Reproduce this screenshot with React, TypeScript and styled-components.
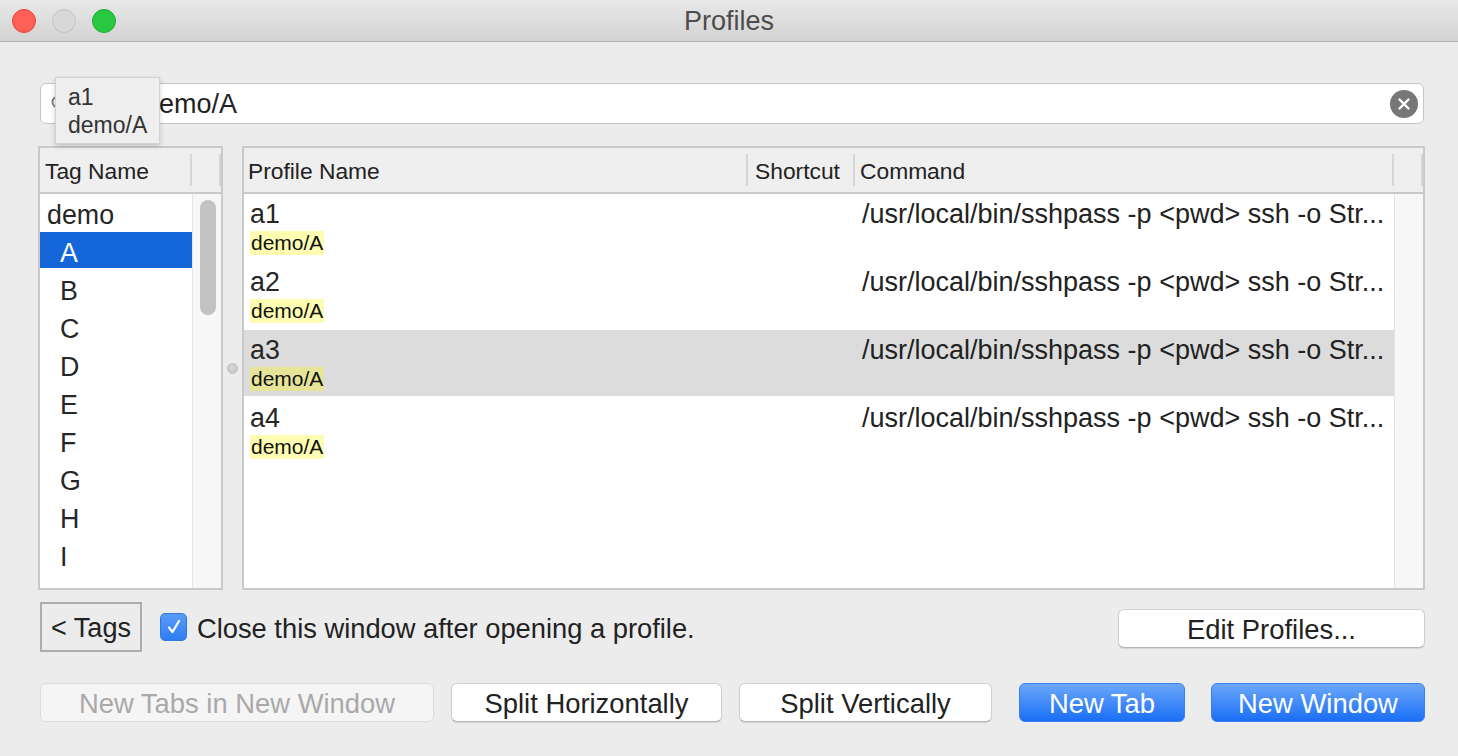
import React from "react";
import styled, { createGlobalStyle, css } from "styled-components";

const Global = createGlobalStyle`
  html, body { margin: 0; padding: 0; background: #ececec; }
  body { font-family: "Liberation Sans", Arial, sans-serif; color: #222; }
  * { box-sizing: border-box; }
`;

const Window = styled.div`
  width: 1458px;
  height: 756px;
  display: flex;
  flex-direction: column;
  background: #ececec;
  overflow: hidden;
`;

const TitleBar = styled.div`
  height: 42px;
  display: grid;
  grid-template-columns: 1fr auto 1fr;
  align-items: center;
  background: linear-gradient(#e8e8e8, #d3d3d3);
  border-bottom: 1px solid #b4b4b4;
`;

const Lights = styled.div`
  display: flex;
  gap: 16px;
  padding-left: 12px;
`;

const Light = styled.span<{ $c: string; $b: string }>`
  width: 24px;
  height: 24px;
  border-radius: 50%;
  background: ${(p) => p.$c};
  border: 1px solid ${(p) => p.$b};
`;

const Title = styled.div`
  font-size: 27px;
  color: #4d4d4d;
  margin-top: 2px;
`;

const Content = styled.div`
  flex: 1;
  display: flex;
  flex-direction: column;
  padding: 41px 33px 0 38px;
`;

const SearchField = styled.div`
  position: relative;
  height: 41px;
  margin: 0 1px 0 2px;
  background: #fff;
  border: 1px solid #c6c6c6;
  border-radius: 6px;
  display: flex;
  align-items: center;
`;

const SearchIcon = styled.svg`
  width: 18px;
  height: 18px;
  margin-left: 10px;
  flex: none;
`;

const SearchText = styled.span`
  margin-left: 75px;
  padding-top: 2px;
  font-size: 27px;
  color: #222;
`;

const ClearButton = styled.span`
  margin-left: auto;
  margin-right: 5px;
  width: 28px;
  height: 28px;
  border-radius: 50%;
  background: #777;
  display: flex;
  align-items: center;
  justify-content: center;
`;

const Tooltip = styled.div`
  position: absolute;
  left: 14px;
  top: -7px;
  width: 105px;
  height: 67px;
  background: #eeeeee;
  border: 1px solid #d2d2d2;
  box-shadow: 0 2px 5px rgba(0, 0, 0, 0.18);
  padding: 5px 0 0 12px;
  font-size: 23px;
  line-height: 28px;
  color: #333;
  z-index: 2;
`;

const TablesRow = styled.div`
  margin-top: 22px;
  height: 444px;
  display: flex;
`;

const Frame = styled.div<{ $w?: number }>`
  ${(p) => (p.$w ? css`width: ${p.$w}px; flex: none;` : css`flex: 1;`)}
  border: 2px solid #c9c9c9;
  background: #fff;
  display: flex;
  flex-direction: column;
  overflow: hidden;
`;

const Header = styled.div<{ $cols: string }>`
  height: 46px;
  flex: none;
  display: grid;
  grid-template-columns: ${(p) => p.$cols};
  background: #efefef;
  border-bottom: 2px solid #c9c9c9;
`;

const HeaderCell = styled.div<{ $pad?: number }>`
  position: relative;
  display: flex;
  align-items: center;
  padding-left: ${(p) => p.$pad ?? 5}px;
  padding-top: 3px;
  font-size: 22.8px;
  color: #222;
  white-space: nowrap;
  &::after {
    content: "";
    position: absolute;
    right: 0;
    top: 6px;
    bottom: 6px;
    width: 2px;
    background: #d6d6d6;
  }
`;

const Body = styled.div`
  flex: 1;
  display: flex;
  min-height: 0;
`;

const ListCol = styled.div`
  flex: 1;
  overflow: hidden;
`;

const Track = styled.div`
  width: 29px;
  flex: none;
  background: #f7f7f7;
  border-left: 1px solid #e4e4e4;
  padding: 6px 0 0 7px;
`;

const Thumb = styled.div`
  width: 16px;
  height: 115px;
  border-radius: 8px;
  background: #c2c2c2;
`;

const TagRow = styled.div<{ $sel?: boolean; $indent?: boolean }>`
  height: 36px;
  margin-bottom: 2px;
  display: flex;
  align-items: center;
  padding-top: 6px;
  padding-left: ${(p) => (p.$indent ? 20 : 7)}px;
  font-size: 26.8px;
  color: ${(p) => (p.$sel ? "#fff" : "#262626")};
  background: ${(p) => (p.$sel ? "#1567d9" : "transparent")};
`;

const Splitter = styled.div`
  width: 19px;
  flex: none;
  display: flex;
  align-items: center;
  justify-content: center;
`;

const Dot = styled.span`
  width: 11px;
  height: 11px;
  border-radius: 50%;
  background: radial-gradient(circle at 40% 35%, #d8d8d8, #bdbdbd);
  border: 1px solid #c2c2c2;
`;

const ProfRow = styled.div<{ $sel?: boolean }>`
  height: 66px;
  margin-bottom: 2px;
  display: grid;
  grid-template-columns: 504px 107px 1fr;
  background: ${(p) => (p.$sel ? "#dcdcdc" : "transparent")};
`;

const NameCell = styled.div`
  padding: 5px 0 0 6px;
  display: flex;
  flex-direction: column;
  align-items: flex-start;
`;

const Name = styled.span`
  font-size: 26.8px;
  line-height: 30px;
  color: #262626;
`;

const TagChip = styled.span`
  margin-top: 2px;
  font-size: 21px;
  line-height: 24px;
  padding: 0 1px;
  color: #111;
  background: rgba(255, 250, 0, 0.3);
`;

const CmdCell = styled.div`
  padding: 5px 0 0 7px;
  font-size: 27px;
  line-height: 30px;
  color: #222;
  white-space: nowrap;
  overflow: hidden;
`;

const OptionsRow = styled.div`
  margin-top: 12px;
  display: flex;
  align-items: center;
`;

const TagsButton = styled.button`
  margin-left: 2px;
  width: 102px;
  height: 50px;
  border: 2px solid #adadad;
  background: #ececec;
  font-family: inherit;
  font-size: 27px;
  color: #222;
  padding: 3px 0 0;
`;

const CheckBox = styled.span`
  margin-left: 18px;
  width: 27px;
  height: 28px;
  border-radius: 5px;
  background: linear-gradient(#5a9cf8, #2f7cf2);
  border: 1px solid #2f78e6;
  display: flex;
  align-items: center;
  justify-content: center;
`;

const CheckLabel = styled.span`
  margin-left: 10px;
  padding-top: 3px;
  font-size: 27.3px;
  color: #222;
`;

const ButtonsRow = styled.div`
  margin-top: 31px;
  display: flex;
  align-items: center;
  padding-left: 2px;
`;

const Btn = styled.button<{ $w: number; $gap?: number; $kind?: "blue" | "disabled" | "white"; $auto?: boolean }>`
  width: ${(p) => p.$w}px;
  height: 39px;
  margin-left: ${(p) => (p.$auto ? "auto" : `${p.$gap ?? 0}px`)};
  border-radius: 6px;
  font-family: inherit;
  font-size: 27.4px;
  padding: 3px 0 0;
  ${(p) =>
    p.$kind === "blue"
      ? css`
          background: linear-gradient(#6ca8fb, #1a6ef5);
          border: 1px solid #3b82f0;
          color: #fff;
        `
      : p.$kind === "disabled"
      ? css`
          background: #f5f5f5;
          border: 1px solid #dcdcdc;
          color: #a9a9a9;
        `
      : css`
          background: #fff;
          border: 1px solid #cfcfcf;
          border-bottom-color: #b4b4b4;
          box-shadow: 0 1px 1px rgba(0, 0, 0, 0.1);
          color: #222;
        `}
`;

const EditBtn = styled(Btn)`
  margin-top: 3px;
`;

const tags = ["A", "B", "C", "D", "E", "F", "G", "H", "I", ""];
const profiles = ["a1", "a2", "a3", "a4"];
const cmd = "/usr/local/bin/sshpass -p <pwd> ssh -o Str...";

export default function App() {
  return (
    <>
      <Global />
      <Window>
        <TitleBar>
          <Lights>
            <Light $c="#fe5f57" $b="#e2463f" />
            <Light $c="#d8d8d8" $b="#c4c4c4" />
            <Light $c="#28c840" $b="#1dad2b" />
          </Lights>
          <Title>Profiles</Title>
          <div />
        </TitleBar>
        <Content>
          <SearchField>
            <SearchIcon viewBox="0 0 18 18">
              <circle cx="7" cy="7" r="5.5" fill="none" stroke="#777" strokeWidth="1.8" />
              <line x1="11" y1="11" x2="16" y2="16" stroke="#777" strokeWidth="2" strokeLinecap="round" />
            </SearchIcon>
            <SearchText>demo/A</SearchText>
            <ClearButton>
              <svg width="14" height="14" viewBox="0 0 14 14">
                <path d="M2.5 2.5 L11.5 11.5 M11.5 2.5 L2.5 11.5" stroke="#fff" strokeWidth="2.4" strokeLinecap="round" />
              </svg>
            </ClearButton>
            <Tooltip>
              <div>a1</div>
              <div>demo/A</div>
            </Tooltip>
          </SearchField>
          <TablesRow>
            <Frame $w={185}>
              <Header $cols="152px 29px">
                <HeaderCell>Tag Name</HeaderCell>
                <HeaderCell />
              </Header>
              <Body>
                <ListCol>
                  <TagRow>demo</TagRow>
                  {tags.map((t, i) => (
                    <TagRow key={i} $indent $sel={t === "A"}>
                      {t}
                    </TagRow>
                  ))}
                </ListCol>
                <Track>
                  <Thumb />
                </Track>
              </Body>
            </Frame>
            <Splitter>
              <Dot />
            </Splitter>
            <Frame>
              <Header $cols="504px 107px 1fr 29px">
                <HeaderCell $pad={4}>Profile Name</HeaderCell>
                <HeaderCell $pad={7}>Shortcut</HeaderCell>
                <HeaderCell $pad={5}>Command</HeaderCell>
                <HeaderCell />
              </Header>
              <Body>
                <ListCol>
                  {profiles.map((p) => (
                    <ProfRow key={p} $sel={p === "a3"}>
                      <NameCell>
                        <Name>{p}</Name>
                        <TagChip>demo/A</TagChip>
                      </NameCell>
                      <div />
                      <CmdCell>{cmd}</CmdCell>
                    </ProfRow>
                  ))}
                </ListCol>
                <Track />
              </Body>
            </Frame>
          </TablesRow>
          <OptionsRow>
            <TagsButton>&lt; Tags</TagsButton>
            <CheckBox>
              <svg width="16" height="18" viewBox="0 0 16 18">
                <path d="M3 9.5 L6.5 14 L13 3" fill="none" stroke="#fff" strokeWidth="2.2" strokeLinecap="round" strokeLinejoin="round" />
              </svg>
            </CheckBox>
            <CheckLabel>Close this window after opening a profile.</CheckLabel>
            <EditBtn $w={307} $auto>Edit Profiles...</EditBtn>
          </OptionsRow>
          <ButtonsRow>
            <Btn $w={394} $kind="disabled">New Tabs in New Window</Btn>
            <Btn $w={271} $gap={17}>Split Horizontally</Btn>
            <Btn $w={253} $gap={17}>Split Vertically</Btn>
            <Btn $w={166} $gap={27} $kind="blue">New Tab</Btn>
            <Btn $w={214} $gap={26} $kind="blue">New Window</Btn>
          </ButtonsRow>
        </Content>
      </Window>
    </>
  );
}
